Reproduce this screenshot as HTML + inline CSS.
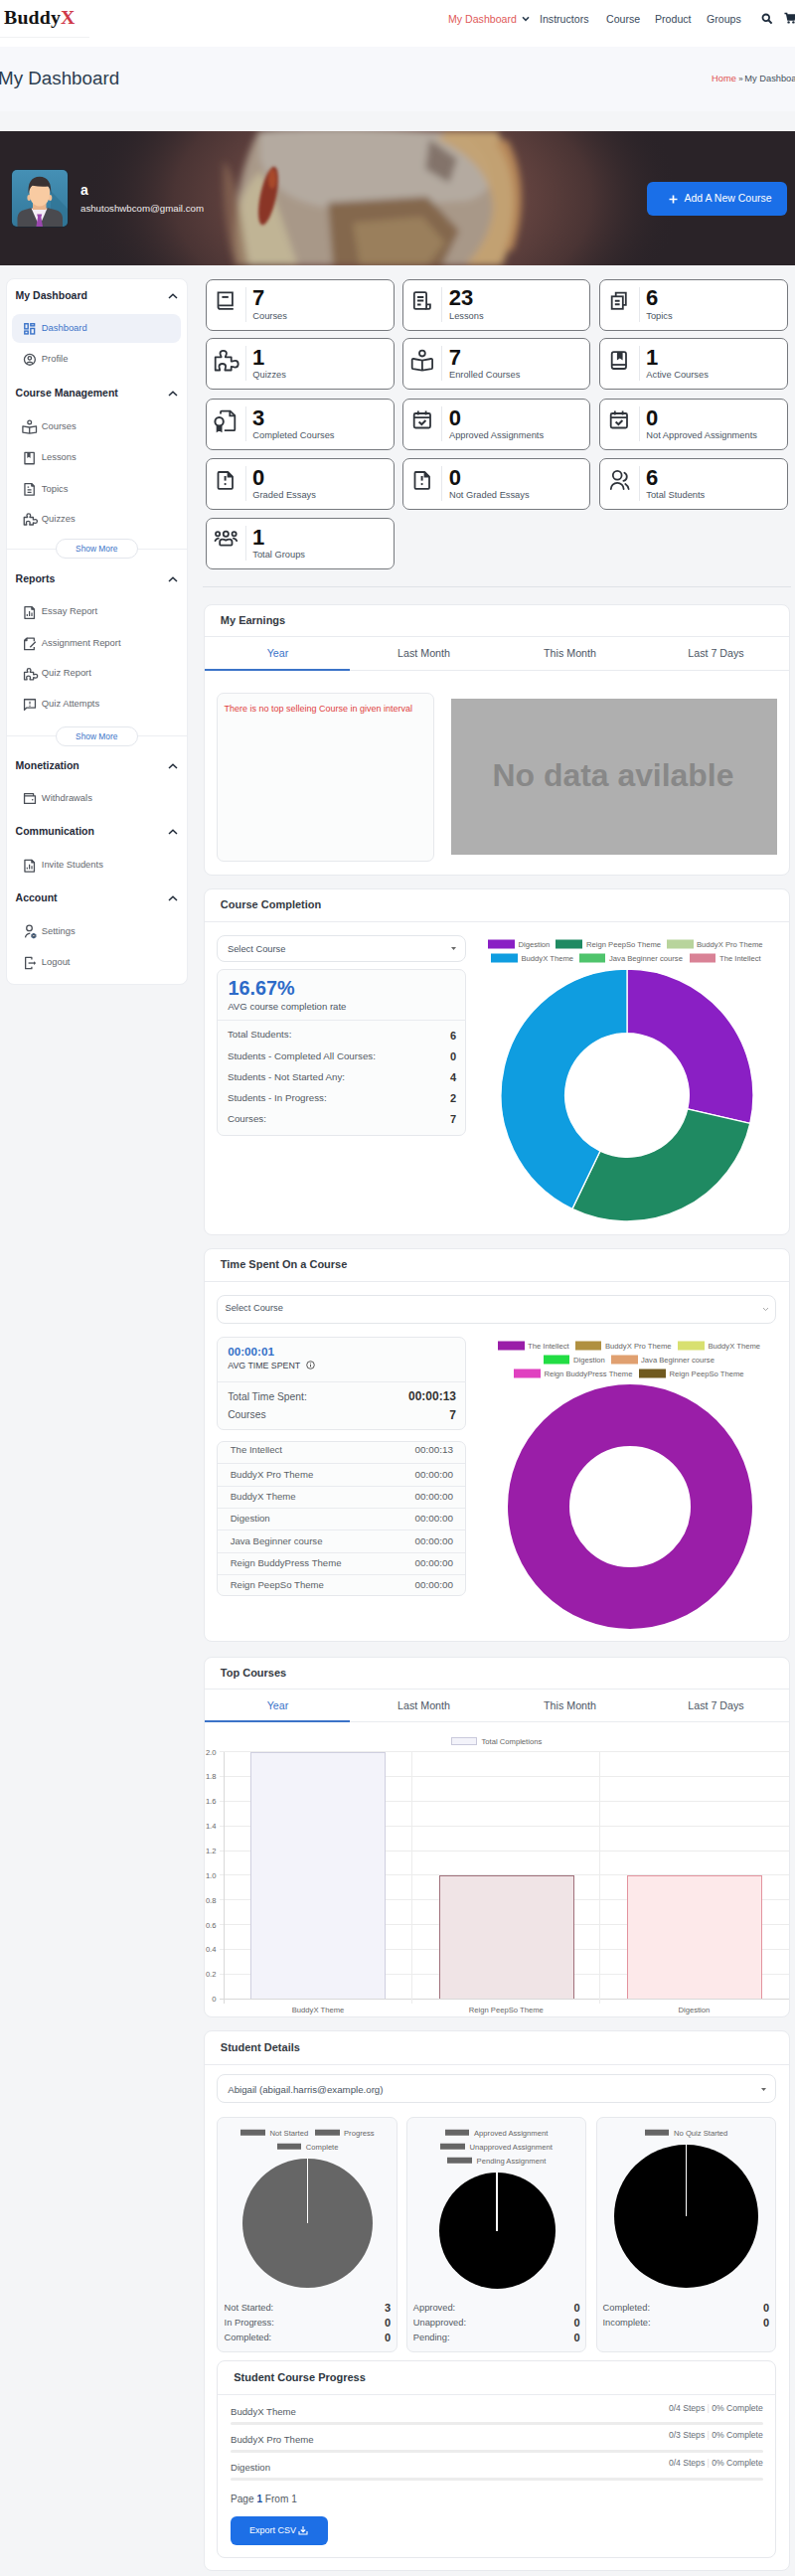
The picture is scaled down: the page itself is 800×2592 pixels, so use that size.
<!DOCTYPE html>
<html><head><meta charset="utf-8">
<style>
*{box-sizing:border-box;margin:0;padding:0}
html,body{width:800px;height:2592px;overflow:hidden}
body{position:relative;background:#f4f5f7;font-family:"Liberation Sans",sans-serif;color:#535a63}
.abs{position:absolute}
.nw{white-space:nowrap}
#hdr{left:0;top:0;width:800px;height:47px;background:#fff}
#logo{left:4px;top:5.8px;font-family:"Liberation Serif",serif;font-weight:bold;font-size:19.8px;color:#141414;letter-spacing:0.2px}
#logo span{color:#cf3a4a}
.nav{top:13px;font-size:10.6px;color:#3a4a5c;white-space:nowrap}
#band{left:0;top:47px;width:800px;height:65px;background:#f7f8fb}
#ptitle{left:-2px;top:67.8px;font-size:18.8px;color:#2c3e50;white-space:nowrap}
#crumb{left:716px;top:74px;font-size:9.3px;color:#44505c;white-space:nowrap}
#crumb a{color:#e04f4f;text-decoration:none}
#banner{left:0;top:132px;width:800px;height:135px;overflow:hidden;background:#2a2328}
#avatar{left:10.7px;top:170.3px;width:58px;height:59px}
#uname{left:81px;top:182.5px;font-size:14px;font-weight:bold;color:#fff}
#uemail{left:81px;top:204px;font-size:9.7px;color:#f0ecec}
#addbtn{left:651px;top:183px;width:141px;height:34px;border-radius:6px;background:#1a6fe8;color:#fff;font-size:10.5px;line-height:33px;padding-left:37.5px;white-space:nowrap}
#addbtn b{position:absolute;left:18px;top:0;font-size:15px;font-weight:normal}
/* sidebar */
#side{left:5.5px;top:280.3px;width:183.3px;height:711px;background:#fff;border:1px solid #eceef2;border-radius:8px}
.sh{left:15.6px;margin-top:-1px;font-size:10.5px;font-weight:bold;color:#1f2937;white-space:nowrap;transform:translateY(-50%)}
.chev{left:169px;width:10px;height:6px;transform:translateY(-50%)}
.si{left:41.8px;margin-top:-1px;font-size:9.4px;color:#63676e;white-space:nowrap;transform:translateY(-50%)}
.sic{left:23px;width:15px;height:15px;transform:translateY(-50%)}
.showmore{left:56px;width:82.5px;height:20px;border:1px solid #e3e6ec;border-radius:10px;background:#fff;color:#3b73c8;font-size:8.4px;text-align:center;line-height:18px}
.sep{left:6px;width:183px;height:1px;background:#eceef2}
/* stats */
.card{background:#fff;border:1.1px solid #76797e;border-radius:7px;width:189.6px;height:52px}
.card .ic{position:absolute;left:8.5px;top:10.5px;width:20px;height:20px}
.card .dv{position:absolute;left:38.5px;top:7.3px;width:1px;height:35px;background:#e6e8ec}
.card .num{position:absolute;left:46px;top:6.8px;font-size:22px;font-weight:bold;color:#111;line-height:24px}
.card .lbl{position:absolute;left:46.3px;top:31.2px;font-size:9.3px;color:#4b5563;white-space:nowrap}
</style></head><body>
<div id="hdr" class="abs"></div>
<div id="logo" class="abs">Buddy<span>X</span></div>
<div class="abs" style="left:0;top:37px;width:90px;height:1px;background:#f0f1f3"></div>
<div class="abs nav" style="left:451px;color:#e05a5a">My Dashboard</div>
<svg class="abs" style="left:525px;top:16px" width="8" height="6" viewBox="0 0 8 6"><path d="M1 1.2 L4 4.4 L7 1.2" stroke="#2c3e50" stroke-width="1.6" fill="none"/></svg>
<div class="abs nav" style="left:543px">Instructors</div>
<div class="abs nav" style="left:610px">Course</div>
<div class="abs nav" style="left:659px">Product</div>
<div class="abs nav" style="left:711px">Groups</div>
<svg class="abs" style="left:766px;top:13px" width="12" height="12" viewBox="0 0 12 12"><circle cx="4.8" cy="4.8" r="3.3" stroke="#1f2d3d" stroke-width="1.8" fill="none"/><path d="M7.3 7.3 L10.6 10.6" stroke="#1f2d3d" stroke-width="2"/></svg>
<svg class="abs" style="left:789px;top:12px" width="12" height="12" viewBox="0 0 12 12"><path d="M0.5 1.5 H2.6 L4 8 H10 L11.3 3 H3.2" stroke="#1f2d3d" stroke-width="1.6" fill="#1f2d3d"/><circle cx="4.6" cy="10.4" r="1.2" fill="#1f2d3d"/><circle cx="9.4" cy="10.4" r="1.2" fill="#1f2d3d"/></svg>
<div id="band" class="abs"></div>
<div id="ptitle" class="abs">My Dashboard</div>
<div id="crumb" class="abs"><a>Home</a><span style="font-size:8px;margin:0 1.5px 0 2.5px;color:#555">»</span>My Dashboard</div>
<div id="banner" class="abs"><svg width="800" height="135" viewBox="0 0 800 135">
<defs>
<radialGradient id="glow" cx="385" cy="68" r="300" gradientUnits="userSpaceOnUse" gradientTransform="translate(385 68) scale(1 0.6) translate(-385 -68)">
<stop offset="0" stop-color="#7a5448"/><stop offset="0.45" stop-color="#654440"/><stop offset="0.7" stop-color="#4a3434"/><stop offset="1" stop-color="#2a2328" stop-opacity="0"/></radialGradient>
<filter id="bl" x="-20%" y="-50%" width="140%" height="200%"><feGaussianBlur stdDeviation="3.5"/></filter>
<filter id="bl2"><feGaussianBlur stdDeviation="1.5"/></filter>
</defs>
<rect width="800" height="135" fill="#2a2328"/>
<rect x="0" y="0" width="800" height="135" fill="url(#glow)"/>
<g filter="url(#bl)">
<path d="M240 135 C232 95 238 45 260 0 L500 0 C524 40 522 95 500 135 Z" fill="#a89888"/>
<path d="M262 0 C290 -5 420 -5 470 5 C500 30 505 60 470 70 L340 78 C300 75 275 60 262 30 Z" fill="#b4aaa0"/>
<path d="M262 40 C280 70 290 110 300 135 L240 135 C230 100 240 60 262 40 Z" fill="#c4b898" opacity="0.85"/>
<path d="M225 30 C240 45 242 90 250 135 L236 135 C226 100 224 60 225 30 Z" fill="#8a6a55" opacity="0.7"/>
<path d="M330 72 L430 66 L462 100 L445 135 L335 135 Z" fill="#84684e"/>
<path d="M355 92 L425 86 L448 112 L430 135 L362 135 Z" fill="#a08460" opacity="0.8"/>
<path d="M440 8 C480 25 500 55 495 85 C490 110 478 125 468 135 L505 135 C524 95 526 45 500 0 L450 0 Z" fill="#c4a270" opacity="0.9"/>
<path d="M498 12 C518 35 522 80 508 120 L516 120 C530 80 527 35 510 8 Z" fill="#b98a5a" opacity="0.9"/>
<path d="M432 8 L460 28 L452 52 L428 38 Z" fill="#7a6a62" opacity="0.85"/>
</g>
<g filter="url(#bl2)">
<ellipse cx="270" cy="65" rx="8" ry="30" fill="#8a3628" transform="rotate(12 270 65)"/>
<ellipse cx="274" cy="48" rx="4" ry="10" fill="#a8482a"/>
</g>
</svg></div>
<div id="avatar" class="abs"><svg width="58" height="59" viewBox="0 0 58 59">
<defs><linearGradient id="avg" x1="0" y1="0" x2="0" y2="1"><stop offset="0" stop-color="#4590b5"/><stop offset="1" stop-color="#33789a"/></linearGradient></defs>
<rect x="0" y="0" width="58" height="59" rx="6" fill="#1e2630"/>
<rect x="1" y="1" width="56" height="57" rx="5" fill="url(#avg)"/>
<path d="M40 22 L57 40 V52 Q57 58 51 58 H40 Z" fill="#2f7394" opacity="0.7"/>
<path d="M6.5 58 V49 Q7 42.5 14 41 L21 39 H36.5 L44 41 Q51.5 42.5 52 49 V58 Z" fill="#4a4a4f"/>
<path d="M20.5 39.5 L28.6 58 L36.6 39.5 Z" fill="#f4eef6"/>
<path d="M26.2 45.6 H31.2 L30.4 48.6 L32 58 H25.4 L27 48.6 Z" fill="#9a47ae"/>
<rect x="22" y="33" width="13.5" height="8" fill="#e8b48c"/>
<ellipse cx="18.2" cy="29" rx="1.8" ry="3" fill="#f0bf96"/><ellipse cx="39.5" cy="29" rx="1.8" ry="3" fill="#f0bf96"/>
<path d="M18.5 22 Q18.5 37 28.8 37.5 Q39.2 37 39.2 22 Q39 15 28.8 15 Q18.6 15 18.5 22 Z" fill="#f8cba2"/>
<path d="M17.6 25 Q16.5 8 28.8 7.8 Q41 8 40.2 25 Q39.5 19.5 37.5 17.5 Q31 18.5 21.5 16.8 Q18.5 19.5 17.6 25 Z" fill="#3a3232"/>
</svg></div>
<div id="uname" class="abs">a</div>
<div id="uemail" class="abs">ashutoshwbcom@gmail.com</div>
<div id="addbtn" class="abs"><svg style="position:absolute;left:22px;top:12.5px" width="9" height="9" viewBox="0 0 9 9"><path d="M4.5 0.5 V8.5 M0.5 4.5 H8.5" stroke="#fff" stroke-width="1.7"/></svg>Add A New Course</div>
<svg width="0" height="0" style="position:absolute">
<defs>
<symbol id="i-grid" viewBox="0 0 16 16"><g fill="none" stroke="currentColor" stroke-width="1.5"><rect x="1.5" y="1.5" width="5" height="6"/><rect x="9.5" y="1.5" width="5" height="3.5"/><rect x="1.5" y="10.5" width="5" height="4"/><rect x="9.5" y="8" width="5" height="6.5"/></g></symbol>
<symbol id="i-user" viewBox="0 0 16 16"><g fill="none" stroke="currentColor" stroke-width="1.3"><circle cx="8" cy="8" r="6.5"/><circle cx="8" cy="6.5" r="2.3"/><path d="M3.8 12.8 C5 10.5 11 10.5 12.2 12.8"/></g></symbol>
<symbol id="i-read" viewBox="0 0 16 16"><g fill="none" stroke="currentColor" stroke-width="1.3"><circle cx="8" cy="3.6" r="2.2"/><path d="M1 7.5 L8 9 L15 7.5 V14.5 L8 15 L1 14.5 Z M8 9 V15"/></g></symbol>
<symbol id="i-bookmark" viewBox="0 0 16 16"><g fill="none" stroke="currentColor" stroke-width="1.3"><rect x="2.5" y="1.5" width="11" height="13"/></g><path d="M5 1.5 H10 V7 L7.5 5.5 L5 7 Z" fill="currentColor"/></symbol>
<symbol id="i-doc" viewBox="0 0 16 16"><g fill="none" stroke="currentColor" stroke-width="1.3"><path d="M3 1.5 H10 L13 4.5 V14.5 H3 Z"/><path d="M5.5 8 H10.5 M5.5 10.5 H10.5 M5.5 5.5 H8"/></g></symbol>
<symbol id="i-puzzle" viewBox="0 0 16 16"><g fill="none" stroke="currentColor" stroke-width="1.3" stroke-linejoin="round"><path d="M1.5 6 H4.5 V4 C4.5 1.5 8 1.5 8 4 V6 H11 V8.5 C13.5 8.5 13.5 12 11 12 V14.5 H8 C8 12.5 4.5 12.5 4.5 14.5 H1.5 Z"/></g></symbol>
<symbol id="i-chartdoc" viewBox="0 0 16 16"><g fill="none" stroke="currentColor" stroke-width="1.3"><path d="M3 1.5 H10 L13 4.5 V14.5 H3 Z"/><path d="M6 12 V9 M8 12 V7 M10 12 V10"/></g></symbol>
<symbol id="i-editdoc" viewBox="0 0 16 16"><g fill="none" stroke="currentColor" stroke-width="1.3"><path d="M9 2 H3 V14.5 H12 V9"/><path d="M7 10 L7.5 8 L13 2.5 L14.5 4 L9 9.5 Z"/><path d="M3 2 L5 1.5"/></g></symbol>
<symbol id="i-msg" viewBox="0 0 16 16"><g fill="none" stroke="currentColor" stroke-width="1.3"><path d="M1.5 2 H14.5 V12 H5 L2.5 14.5 V12 H1.5 Z"/><path d="M8 4.5 V8"/></g><circle cx="8" cy="10" r="0.9" fill="currentColor"/></symbol>
<symbol id="i-wallet" viewBox="0 0 16 16"><g fill="none" stroke="currentColor" stroke-width="1.3"><path d="M1.5 4 H14.5 V14.5 H1.5 Z M1.5 4 L2.5 1.5 H12 V4"/><path d="M10.5 8.5 H14.5 V11 H10.5 Z"/></g></symbol>
<symbol id="i-usergear" viewBox="0 0 16 16"><g fill="none" stroke="currentColor" stroke-width="1.3"><circle cx="6.5" cy="4.5" r="3"/><path d="M1.5 15 C1.5 10.5 4 9 7 9"/><circle cx="11.5" cy="12" r="2"/></g></symbol>
<symbol id="i-logout" viewBox="0 0 16 16"><g fill="none" stroke="currentColor" stroke-width="1.3"><path d="M10 4.5 V1.5 H2.5 V14.5 H10 V11.5"/><path d="M6 8 H14.5 M12 5.5 L14.5 8 L12 10.5"/></g></symbol>
<symbol id="s-book" viewBox="0 0 20 20"><g fill="none" stroke="currentColor" stroke-width="1.6"><path d="M3.5 16 V2.5 H16 V14.5 H5 C4 14.5 3.5 15 3.5 16 C3.5 17 4 17.5 5 17.5 H16"/><path d="M7 6 H12.5"/></g></symbol>
<symbol id="s-lesson" viewBox="0 0 20 20"><g fill="none" stroke="currentColor" stroke-width="1.6"><path d="M14 17.5 H4.5 V2.5 H14 V15.5"/><path d="M7 6 H11.5 M7 9 H11.5 M7 12 H9.5"/><path d="M12 15.5 H17 V17.5 H12"/></g></symbol>
<symbol id="s-topics" viewBox="0 0 20 20"><g fill="none" stroke="currentColor" stroke-width="1.6"><path d="M6 5 V2.5 H16.5 V14 H14"/><path d="M3.5 5 H14 V17.5 H3.5 Z"/><path d="M6 9 H11.5 M6 12 H11.5"/></g></symbol>
<symbol id="s-puzzle" viewBox="0 0 20 20"><g fill="none" stroke="currentColor" stroke-width="1.6" stroke-linejoin="round"><path d="M2 8 H5.5 V5.5 C5.5 2 10 2 10 5.5 V8 H13.5 V10.5 C17 10.5 17 15 13.5 15 V17.5 H10 C10 15 5.5 15 5.5 17.5 H2 Z"/></g></symbol>
<symbol id="s-read" viewBox="0 0 20 20"><g fill="none" stroke="currentColor" stroke-width="1.6"><circle cx="10" cy="4.5" r="2.7"/><path d="M1.8 9.5 L10 11 L18.2 9.5 V17.5 L10 18.2 L1.8 17.5 Z M10 11 V18.2"/></g></symbol>
<symbol id="s-bookmark" viewBox="0 0 20 20"><g fill="none" stroke="currentColor" stroke-width="1.6"><path d="M3.5 16 V2.5 H16 V14.5 H5 C4 14.5 3.5 15 3.5 16 C3.5 17 4 17.5 5 17.5 H16"/></g><path d="M7 2.5 H13 V9 L10 7 L7 9 Z" fill="currentColor"/></symbol>
<symbol id="s-cert" viewBox="0 0 20 20"><g fill="none" stroke="currentColor" stroke-width="1.6"><path d="M8 2 H13 L17 6 V18 H10"/><path d="M12.5 2 V6.5 H17"/><circle cx="6" cy="9.5" r="3.3"/><path d="M4.3 12.5 V17.5 L6 16 L7.7 17.5 V12.5"/></g></symbol>
<symbol id="s-cal" viewBox="0 0 20 20"><g fill="none" stroke="currentColor" stroke-width="1.6"><rect x="2.5" y="4" width="15" height="13.5"/><path d="M2.5 8 H17.5 M6 2 V5.5 M14 2 V5.5"/><path d="M7 12 L9.3 14.2 L13.3 10.2"/></g></symbol>
<symbol id="s-alert" viewBox="0 0 20 20"><g fill="none" stroke="currentColor" stroke-width="1.6"><path d="M4 2.5 H12.5 L16.5 6.5 V17.5 H4 Z"/><path d="M10.2 6.5 V11"/></g><circle cx="10.2" cy="13.5" r="1" fill="currentColor"/></symbol>
<symbol id="s-users" viewBox="0 0 20 20"><g fill="none" stroke="currentColor" stroke-width="1.6"><circle cx="8" cy="6" r="3.6"/><path d="M1.5 18 C1.5 13 4.5 11 8 11 C11.5 11 14.5 13 14.5 18"/><path d="M13 2.8 C15.5 3.6 15.5 8.4 13 9.2 M16 12 C18 13 18.5 15.5 18.5 18"/></g></symbol>
<symbol id="s-group" viewBox="0 0 20 20"><g fill="none" stroke="currentColor" stroke-width="1.5"><circle cx="10" cy="5.5" r="2.6"/><circle cx="3.6" cy="6.5" r="1.8"/><circle cx="16.4" cy="6.5" r="1.8"/><path d="M5.5 15.5 V13 C5.5 10.5 7.5 9.5 10 9.5 C12.5 9.5 14.5 10.5 14.5 13 V15.5 Z"/><path d="M0.8 12.5 C0.8 10.5 2.2 9.8 4.2 9.8 M19.2 12.5 C19.2 10.5 17.8 9.8 15.8 9.8"/></g></symbol>
<symbol id="chev" viewBox="0 0 10 6"><path d="M1 5 L5 1.2 L9 5" stroke="#1f2937" stroke-width="1.5" fill="none"/></symbol>
</defs></svg>
<div id="side" class="abs"></div>
<div class="abs sh" style="top:298px">My Dashboard</div><svg class="abs chev" style="top:298px"><use href="#chev"/></svg>
<div class="abs" style="left:12px;top:316px;width:170px;height:29px;background:#eef1f8;border-radius:8px"></div>
<div class="abs si" style="top:330px;color:#3b73c8">Dashboard</div>
<div class="abs si" style="top:361px">Profile</div>
<div class="abs sh" style="top:396px">Course Management</div><svg class="abs chev" style="top:396px"><use href="#chev"/></svg>
<div class="abs si" style="top:428.5px">Courses</div>
<div class="abs si" style="top:460px">Lessons</div>
<div class="abs si" style="top:491.5px">Topics</div>
<div class="abs si" style="top:521.5px">Quizzes</div>
<div class="abs sep" style="top:552px"></div><div class="abs showmore" style="top:542px">Show More</div>
<div class="abs sh" style="top:582.5px">Reports</div><svg class="abs chev" style="top:582.5px"><use href="#chev"/></svg>
<div class="abs si" style="top:615px">Essay Report</div>
<div class="abs si" style="top:647px">Assignment Report</div>
<div class="abs si" style="top:677px">Quiz Report</div>
<div class="abs si" style="top:708px">Quiz Attempts</div>
<div class="abs sep" style="top:740px"></div><div class="abs showmore" style="top:730.5px">Show More</div>
<div class="abs sh" style="top:770.5px">Monetization</div><svg class="abs chev" style="top:770.5px"><use href="#chev"/></svg>
<div class="abs si" style="top:802.5px">Withdrawals</div>
<div class="abs sh" style="top:837px">Communication</div><svg class="abs chev" style="top:837px"><use href="#chev"/></svg>
<div class="abs si" style="top:869.5px">Invite Students</div>
<div class="abs sh" style="top:904px">Account</div><svg class="abs chev" style="top:904px"><use href="#chev"/></svg>
<div class="abs si" style="top:936.5px">Settings</div>
<div class="abs si" style="top:967.5px">Logout</div>
<svg class="abs" style="left:0;top:0" width="200" height="1000" viewBox="0 0 200 1000">
<g fill="none" stroke="#3b73c8" stroke-width="1.4"><rect x="24.8" y="325.75" width="3.4" height="5.1"/><rect x="30.83" y="325.75" width="3.78" height="2.08"/><rect x="24.8" y="333.1" width="3.4" height="2.84"/><rect x="30.83" y="330.47" width="3.78" height="5.48"/></g>
<g fill="none" stroke="#4a4f57" stroke-width="1.3" stroke-linejoin="round">
<circle cx="29.9" cy="361.8" r="5.45"/><circle cx="29.85" cy="360.3" r="1.75"/><path d="M26.3 365.8 Q29.9 362.6 33.5 365.8"/>
<circle cx="29.7" cy="424.9" r="1.85"/><path d="M22.9 428.9 L29.7 430 L36.5 428.9 V435.1 L29.7 436.1 L22.9 435.1 Z M29.7 430 V436.1"/>
<rect x="24.95" y="455.45" width="9.3" height="11.3"/>
<path d="M24.95 486.65 H31.8 L34.25 489.1 V498.15 H24.95 Z"/><path d="M31.8 486.65 L34.25 489.1 H31.8 Z" fill="#4a4f57"/><path d="M27.6 490.2 H29.2 M27.6 492.8 H31.6 M27.6 495.3 H31.6" stroke-width="1.2"/>
<path transform="translate(24.25 516.85) scale(0.57) translate(-9.7 -12.9)" d="M9.7 19.3 H15.6 C15.6 17.9 14.5 17.3 14.5 15.6 C14.5 13.9 15.9 12.9 17.7 12.9 C19.5 12.9 20.9 13.9 20.9 15.6 C20.9 17.3 19.8 17.9 19.8 19.3 H25.7 V23.6 C27.1 23.6 27.7 22.9 29.6 22.9 C31.4 22.9 32.7 24.3 32.7 26.3 C32.7 28.3 31.4 29.6 29.6 29.6 C27.7 29.6 27.1 28.9 25.7 28.9 V32.5 H19.4 C19.4 31 20.1 30.5 20.1 28.6 C20.1 26.9 18.7 26 16.8 26 C14.9 26 13.5 26.9 13.5 28.6 C13.5 30.5 14.2 31 14.2 32.5 H9.7 Z" stroke-width="2.3"/>
<path d="M24.95 610.65 H31.9 L34.45 613.20 V622.35 H24.95 Z"/><path d="M31.9 610.65 L34.45 613.20 H31.9 Z" fill="#4a4f57"/><path d="M27.3 619.90 V618.00 M29.6 619.90 V615.00 M32 619.90 V616.60" stroke-width="1.2"/>
<path d="M27 642.15 H34.3 V645.3 M34.3 650.9 V653.65 H24.65 V644.5 L27 642.15"/><path d="M24.65 644.5 L27 642.15 V644.5 Z" fill="#4a4f57"/><path d="M30.3 651.2 L35.8 645.7"/>
<path transform="translate(24.55 672.65) scale(0.57) translate(-9.7 -12.9)" d="M9.7 19.3 H15.6 C15.6 17.9 14.5 17.3 14.5 15.6 C14.5 13.9 15.9 12.9 17.7 12.9 C19.5 12.9 20.9 13.9 20.9 15.6 C20.9 17.3 19.8 17.9 19.8 19.3 H25.7 V23.6 C27.1 23.6 27.7 22.9 29.6 22.9 C31.4 22.9 32.7 24.3 32.7 26.3 C32.7 28.3 31.4 29.6 29.6 29.6 C27.7 29.6 27.1 28.9 25.7 28.9 V32.5 H19.4 C19.4 31 20.1 30.5 20.1 28.6 C20.1 26.9 18.7 26 16.8 26 C14.9 26 13.5 26.9 13.5 28.6 C13.5 30.5 14.2 31 14.2 32.5 H9.7 Z" stroke-width="2.3"/>
<path d="M24.55 703.75 H35.45 V712.2 H26.6 L24.55 714.4 Z"/><path d="M30 705.8 V708.6" stroke-width="1.2"/>
<path d="M24.55 800.9 H35.45 V808.45 H24.55 Z M24.55 800.9 V798.65 H33.6 V800.9"/>
<path d="M24.95 865.35 H31.9 L34.45 867.90 V877.05 H24.95 Z"/><path d="M31.9 865.35 L34.45 867.90 H31.9 Z" fill="#4a4f57"/><path d="M27.3 874.60 V872.70 M29.6 874.60 V869.70 M32 874.60 V871.30" stroke-width="1.2"/>
<circle cx="29.5" cy="933.9" r="2.8"/><path d="M25.5 943.4 Q26 939.8 30.3 939.2"/><circle cx="33.9" cy="941.6" r="1.3" stroke-width="1.2"/>
<path d="M31.9 965.4 V963.45 H25.65 V974.65 H31.9 V972.7"/><path d="M28.6 969.05 H34.5"/>
</g>
<g fill="#4a4f57"><path d="M27.3 455.5 H30.6 V461 L28.95 459.7 L27.3 461 Z"/><circle cx="30" cy="710.3" r="0.7"/><circle cx="32.7" cy="804.8" r="0.8"/><path d="M34 967.2 L36.2 969.05 L34 970.9 Z"/>
<path d="M33.9 939.4 L35.9 940.5 V942.7 L33.9 943.8 L31.9 942.7 V940.5 Z" fill="none" stroke="#3f5a7a" stroke-width="1.1"/></g>
</svg>
<svg width="0" height="0" style="position:absolute"><defs><symbol id="c-book" viewBox="0 0 40 52"><g fill="none" stroke="currentColor" stroke-width="1.8"><path d="M12.5 29.5 V14.3 H26.9 V27.4 H13.5 M12.5 28.4 C12.5 30.1 13.3 30.9 14.6 30.9 H27.8" /><path d="M16.4 18.9 H22.8" stroke-width="2"/></g></symbol><symbol id="c-lesson" viewBox="0 0 40 52"><g fill="none" stroke="currentColor" stroke-width="1.8"><path d="M13.3 14.2 H22.6 Q24.1 14.2 24.1 15.7 V29.4 Q24.1 30.9 22.6 30.9 H13.3 Q11.8 30.9 11.8 29.4 V15.7 Q11.8 14.2 13.3 14.2 Z"/><path d="M24.1 26.3 H27.9 V29.3 Q27.9 30.9 26.3 30.9 H22.8"/><path d="M15 18.9 H21.3 M15 22.6 H21.3 M15 26.4 H18.6" stroke-width="2"/></g></symbol><symbol id="c-topics" viewBox="0 0 40 52"><g fill="none" stroke="currentColor" stroke-width="1.8"><rect x="12.7" y="18.3" width="11.1" height="12.5"/><path d="M16.7 18.3 V14.6 H26.8 V26.8 H23.8"/><path d="M15.8 22.8 H20.6 M15.8 26.3 H20.6" stroke-width="2"/></g></symbol><symbol id="c-puzzle" viewBox="0 0 40 52"><g fill="none" stroke="currentColor" stroke-width="1.8"><path d="M9.7 19.3 H15.6 C15.6 17.9 14.5 17.3 14.5 15.6 C14.5 13.9 15.9 12.9 17.7 12.9 C19.5 12.9 20.9 13.9 20.9 15.6 C20.9 17.3 19.8 17.9 19.8 19.3 H25.7 V23.6 C27.1 23.6 27.7 22.9 29.6 22.9 C31.4 22.9 32.7 24.3 32.7 26.3 C32.7 28.3 31.4 29.6 29.6 29.6 C27.7 29.6 27.1 28.9 25.7 28.9 V32.5 H19.4 C19.4 31 20.1 30.5 20.1 28.6 C20.1 26.9 18.7 26 16.8 26 C14.9 26 13.5 26.9 13.5 28.6 C13.5 30.5 14.2 31 14.2 32.5 H9.7 Z" stroke-linejoin="round"/></g></symbol><symbol id="c-read" viewBox="0 0 40 52"><g fill="none" stroke="currentColor" stroke-width="1.8"><circle cx="19.9" cy="15.6" r="2.9"/><path d="M9.7 22.2 Q9.7 20.8 11.1 21 L19.9 22.6 L28.7 21 Q30.1 20.8 30.1 22.2 V30 Q30.1 31 29.1 31.2 L19.9 32.7 L10.7 31.2 Q9.7 31 9.7 30 Z M19.9 22.6 V32.5" stroke-linejoin="round"/></g></symbol><symbol id="c-bookmark" viewBox="0 0 40 52"><g fill="none" stroke="currentColor" stroke-width="1.8"><rect x="12.7" y="14.2" width="14.3" height="16.8" rx="2"/><path d="M12.7 27 H27"/><path d="M17.9 14.2 H23.6 V22.6 L20.75 20.6 L17.9 22.6 Z" fill="currentColor" stroke="none"/></g></symbol><symbol id="c-cert" viewBox="0 0 40 52"><g fill="none" stroke="currentColor" stroke-width="1.8"><path d="M15 15.5 V13.7 Q15 12.7 16 12.7 H24.6 L29.3 17.2 V31.2 Q29.3 32.2 28.3 32.2 H18.8"/><path d="M24.3 12.9 V17.3 H29.1"/><circle cx="13.6" cy="23.2" r="4.2" stroke-width="2"/><path d="M11.6 27.4 V32.6 L13.6 31.4 L15.6 32.6 V27.4" fill="currentColor"/></g></symbol><symbol id="c-cal" viewBox="0 0 40 52"><g fill="none" stroke="currentColor" stroke-width="1.8"><rect x="11.7" y="15" width="16.3" height="14.5" rx="1.5"/><path d="M11.7 19.2 H28 M15.8 12.5 V16.5 M23.6 12.5 V16.5"/><path d="M16.6 23.4 L19.4 26 L23.4 22" stroke-width="2"/></g></symbol><symbol id="c-alert" viewBox="0 0 40 52"><g fill="none" stroke="currentColor" stroke-width="1.8"><path d="M13.5 14 H22.3 L27 18.7 V29.8 Q27 30.8 26 30.8 H13.5 Q12.5 30.8 12.5 29.8 V15 Q12.5 14 13.5 14 Z" stroke-linejoin="round"/><path d="M22.5 14.2 V18.5 H26.8" fill="currentColor"/><path d="M19.6 18 V22.6" stroke-width="2"/><circle cx="19.6" cy="26.1" r="1.1" fill="currentColor" stroke="none"/></g></symbol><symbol id="c-users" viewBox="0 0 40 52"><g fill="none" stroke="currentColor" stroke-width="1.8"><circle cx="18.2" cy="17.3" r="4.4"/><path d="M11.8 31 A6.4 6.2 0 0 1 24.6 31" stroke-linecap="round"/><path d="M25.4 14.7 A4.4 4.4 0 0 1 24.4 22.9" stroke-linecap="round"/><path d="M26.3 25.9 C28 27 29.3 28.8 29.6 31" stroke-linecap="round"/></g></symbol><symbol id="c-group" viewBox="0 0 40 52"><g fill="none" stroke="currentColor" stroke-width="1.8"><circle cx="20.3" cy="16.2" r="2.6"/><circle cx="12.1" cy="16.3" r="2.1"/><circle cx="28.6" cy="16.3" r="2.1"/><path d="M14.2 26.7 V24.3 Q14.2 21.6 16.6 21.6 Q18.6 21.6 20.3 22.6 Q22 21.6 24 21.6 Q26.5 21.6 26.5 24.3 V26.7 Q26.5 27.6 25.6 27.6 H15.1 Q14.2 27.6 14.2 26.7 Z" stroke-linejoin="round"/><path d="M9.5 23.1 Q10.3 21 12.8 20.6 M27.9 20.6 Q30.4 21 31.2 23.1" stroke-linecap="round"/></g></symbol></defs></svg>
<div class="abs card" style="left:207px;top:280.5px"><svg style="position:absolute;left:-1px;top:-1.5px;color:#2f343b" width="40" height="52"><use href="#c-book"/></svg><div class="dv"></div><div class="num">7</div><div class="lbl">Courses</div></div>
<div class="abs card" style="left:404.7px;top:280.5px"><svg style="position:absolute;left:-1px;top:-1.5px;color:#2f343b" width="40" height="52"><use href="#c-lesson"/></svg><div class="dv"></div><div class="num">23</div><div class="lbl">Lessons</div></div>
<div class="abs card" style="left:603px;top:280.5px"><svg style="position:absolute;left:-1px;top:-1.5px;color:#2f343b" width="40" height="52"><use href="#c-topics"/></svg><div class="dv"></div><div class="num">6</div><div class="lbl">Topics</div></div>
<div class="abs card" style="left:207px;top:340.2px"><svg style="position:absolute;left:-1px;top:-1.6px;color:#2f343b" width="40" height="52"><use href="#c-puzzle"/></svg><div class="dv"></div><div class="num">1</div><div class="lbl">Quizzes</div></div>
<div class="abs card" style="left:404.7px;top:340.2px"><svg style="position:absolute;left:-1px;top:-1.6px;color:#2f343b" width="40" height="52"><use href="#c-read"/></svg><div class="dv"></div><div class="num">7</div><div class="lbl">Enrolled Courses</div></div>
<div class="abs card" style="left:603px;top:340.2px"><svg style="position:absolute;left:-1px;top:-1.6px;color:#2f343b" width="40" height="52"><use href="#c-bookmark"/></svg><div class="dv"></div><div class="num">1</div><div class="lbl">Active Courses</div></div>
<div class="abs card" style="left:207px;top:401px"><svg style="position:absolute;left:-1px;top:-1.0px;color:#2f343b" width="40" height="52"><use href="#c-cert"/></svg><div class="dv"></div><div class="num">3</div><div class="lbl">Completed Courses</div></div>
<div class="abs card" style="left:404.7px;top:401px"><svg style="position:absolute;left:-1px;top:-1.0px;color:#2f343b" width="40" height="52"><use href="#c-cal"/></svg><div class="dv"></div><div class="num">0</div><div class="lbl">Approved Assignments</div></div>
<div class="abs card" style="left:603px;top:401px"><svg style="position:absolute;left:-1px;top:-1.0px;color:#2f343b" width="40" height="52"><use href="#c-cal"/></svg><div class="dv"></div><div class="num">0</div><div class="lbl">Not Approved Assignments</div></div>
<div class="abs card" style="left:207px;top:461.2px"><svg style="position:absolute;left:-1px;top:-1.2px;color:#2f343b" width="40" height="52"><use href="#c-alert"/></svg><div class="dv"></div><div class="num">0</div><div class="lbl">Graded Essays</div></div>
<div class="abs card" style="left:404.7px;top:461.2px"><svg style="position:absolute;left:-1px;top:-1.2px;color:#2f343b" width="40" height="52"><use href="#c-alert"/></svg><div class="dv"></div><div class="num">0</div><div class="lbl">Not Graded Essays</div></div>
<div class="abs card" style="left:603px;top:461.2px"><svg style="position:absolute;left:-1px;top:-1.2px;color:#2f343b" width="40" height="52"><use href="#c-users"/></svg><div class="dv"></div><div class="num">6</div><div class="lbl">Total Students</div></div>
<div class="abs card" style="left:207px;top:521px"><svg style="position:absolute;left:-1px;top:-1.0px;color:#2f343b" width="40" height="52"><use href="#c-group"/></svg><div class="dv"></div><div class="num">1</div><div class="lbl">Total Groups</div></div>
<div class="abs" style="left:204px;top:590px;width:592px;height:1px;background:#dfe2e7"></div>
<style>
.sec{position:absolute;left:205px;width:589.5px;background:#fff;border:1px solid #e8eaee;border-radius:8px}
.st{position:absolute;left:221.8px;font-size:11px;font-weight:bold;color:#343a42;white-space:nowrap;transform:translateY(-50%)}
.hl{position:absolute;left:206px;width:588px;height:1px;background:#e9ebef}
.tab{position:absolute;width:147px;text-align:center;font-size:10.7px;color:#4b5563;transform:translateY(-50%)}
.box{position:absolute;background:#fbfcfc;border:1px solid #e6e8ec;border-radius:7px}
.sel{position:absolute;background:#fff;border:1px solid #e3e6ea;border-radius:8px}
.tx{position:absolute;white-space:nowrap;transform:translateY(-50%)}
.rv{position:absolute;white-space:nowrap;transform:translate(-100%,-50%)}
.lg{position:absolute;font-size:7.65px;color:#666;white-space:nowrap;transform:translateY(-50%)}
.lb{position:absolute;width:26.5px;height:9px;transform:translateY(-50%)}
.ctr{position:absolute;white-space:nowrap;transform:translate(-50%,-50%)}
</style>
<!-- My Earnings -->
<div class="sec" style="top:607.5px;height:273px"></div>
<div class="st" style="top:624px">My Earnings</div>
<div class="hl" style="top:640px"></div>
<div class="tab" style="left:206px;top:657px;color:#3b73c8">Year</div>
<div class="tab" style="left:353px;top:657px">Last Month</div>
<div class="tab" style="left:500px;top:657px">This Month</div>
<div class="tab" style="left:647px;top:657px">Last 7 Days</div>
<div class="hl" style="top:673.5px"></div>
<div class="abs" style="left:206px;top:672.5px;width:146px;height:2px;background:#3b73c8"></div>
<div class="box" style="left:218.3px;top:697px;width:219px;height:170px"></div>
<div class="tx" style="left:225.4px;top:712.8px;font-size:9px;color:#e03c3c">There is no top selleing Course in given interval</div>
<div class="abs" style="left:453.6px;top:703.2px;width:328px;height:157px;background:#afafaf"></div>
<div class="ctr" style="left:617px;top:780px;font-size:31.9px;font-weight:bold;color:#888">No data avilable</div>
<!-- Course Completion -->
<div class="sec" style="top:893.5px;height:349px"></div>
<div class="st" style="top:910px">Course Completion</div>
<div class="hl" style="top:926.5px"></div>
<div class="sel" style="left:218.3px;top:940.6px;width:251px;height:27.5px"></div>
<div class="tx" style="left:229px;top:954.7px;font-size:9.3px;color:#4b5563">Select Course</div>
<svg class="abs" style="left:454px;top:953px" width="5" height="4" viewBox="0 0 5 4"><path d="M0 0 H5 L2.5 3 Z" fill="#666"/></svg>
<div class="box" style="left:218.3px;top:975px;width:251px;height:167.5px"></div>
<div class="abs" style="left:219px;top:1026px;width:249.5px;height:1px;background:#e9ebef"></div>
<div class="tx" style="left:229.6px;top:993.8px;font-size:19.8px;font-weight:bold;color:#2d6bc8">16.67%</div>
<div class="tx" style="left:229.2px;top:1012px;font-size:9.6px;color:#4b5563">AVG course completion rate</div>
<div class="tx" style="left:228.9px;top:1040.3px;font-size:9.75px">Total Students:</div><div class="rv" style="left:459px;top:1041.5px;font-size:11px;font-weight:bold;color:#333">6</div>
<div class="tx" style="left:228.9px;top:1061.8px;font-size:9.75px">Students - Completed All Courses:</div><div class="rv" style="left:459px;top:1063px;font-size:11px;font-weight:bold;color:#333">0</div>
<div class="tx" style="left:228.9px;top:1082.9px;font-size:9.75px">Students - Not Started Any:</div><div class="rv" style="left:459px;top:1084px;font-size:11px;font-weight:bold;color:#333">4</div>
<div class="tx" style="left:228.9px;top:1104.1px;font-size:9.75px">Students - In Progress:</div><div class="rv" style="left:459px;top:1105.3px;font-size:11px;font-weight:bold;color:#333">2</div>
<div class="tx" style="left:228.9px;top:1125.2px;font-size:9.75px">Courses:</div><div class="rv" style="left:459px;top:1126.4px;font-size:11px;font-weight:bold;color:#333">7</div>
<div class="lb" style="left:491.3px;top:949.6px;background:#8a1fc4"></div><div class="lg" style="left:521.5px;top:949.6px">Digestion</div>
<div class="lb" style="left:559px;top:949.6px;background:#1f8a62"></div><div class="lg" style="left:590px;top:949.6px">Reign PeepSo Theme</div>
<div class="lb" style="left:671.3px;top:949.6px;background:#b8d49c"></div><div class="lg" style="left:701px;top:949.6px">BuddyX Pro Theme</div>
<div class="lb" style="left:494.3px;top:964px;background:#0f9de0"></div><div class="lg" style="left:524.5px;top:964px">BuddyX Theme</div>
<div class="lb" style="left:582.6px;top:964px;background:#4fc46c"></div><div class="lg" style="left:613px;top:964px">Java Beginner course</div>
<div class="lb" style="left:693.6px;top:964px;background:#d98296"></div><div class="lg" style="left:724px;top:964px">The Intellect</div>
<svg class="abs" style="left:503.5px;top:974.6px" width="254" height="254" viewBox="-127 -127 254 254">
<g stroke="#fff" stroke-width="1.3" stroke-linejoin="round">
<path d="M0 -127 A127 127 0 0 1 123.8 28.3 L60.8 13.9 A62.4 62.4 0 0 0 0 -62.4 Z" fill="#8a1fc4"/>
<path d="M123.8 28.3 A127 127 0 0 1 -55.1 114.4 L-27.1 56.2 A62.4 62.4 0 0 0 60.8 13.9 Z" fill="#1f8a62"/>
<path d="M-55.1 114.4 A127 127 0 0 1 0 -127 L0 -62.4 A62.4 62.4 0 0 0 -27.1 56.2 Z" fill="#0f9de0"/>
</g></svg>
<!-- Time Spent -->
<div class="sec" style="top:1256px;height:396px"></div>
<div class="st" style="top:1272.4px">Time Spent On a Course</div>
<div class="hl" style="top:1289.3px"></div>
<div class="sel" style="left:218.3px;top:1303.4px;width:563px;height:28.5px"></div>
<div class="tx" style="left:226.5px;top:1316.4px;font-size:9.3px;color:#4b5563">Select Course</div>
<svg class="abs" style="left:767px;top:1314.5px" width="7" height="5" viewBox="0 0 7 5"><path d="M1 1 L3.5 3.6 L6 1" stroke="#aaa" stroke-width="1" fill="none"/></svg>
<div class="box" style="left:218.3px;top:1344.6px;width:251px;height:94.5px"></div>
<div class="abs" style="left:219px;top:1390.4px;width:249.5px;height:1px;background:#e9ebef"></div>
<div class="tx" style="left:229.2px;top:1358.8px;font-size:11.7px;font-weight:bold;color:#3370c8">00:00:01</div>
<div class="tx" style="left:229.2px;top:1373.8px;font-size:8.8px;color:#3b4450">AVG TIME SPENT</div>
<svg class="abs" style="left:307.5px;top:1369.3px" width="9" height="9" viewBox="0 0 9 9"><circle cx="4.5" cy="4.5" r="3.8" stroke="#444" stroke-width="0.9" fill="none"/><path d="M4.5 4 V6.5" stroke="#444" stroke-width="0.9"/><circle cx="4.5" cy="2.7" r="0.55" fill="#444"/></svg>
<div class="tx" style="left:229.2px;top:1404.8px;font-size:10.3px">Total Time Spent:</div><div class="rv" style="left:459px;top:1405px;font-size:12px;font-weight:bold;color:#333">00:00:13</div>
<div class="tx" style="left:229.2px;top:1423.2px;font-size:10.3px">Courses</div><div class="rv" style="left:459px;top:1423.5px;font-size:12px;font-weight:bold;color:#333">7</div>
<div class="box" style="left:218.3px;top:1450px;width:251px;height:155.5px;overflow:hidden">
 <div style="position:absolute;left:0;top:21px;width:100%;border-top:1px solid #e9ebef"></div>
 <div style="position:absolute;left:0;top:43.5px;width:100%;border-top:1px solid #e9ebef"></div>
 <div style="position:absolute;left:0;top:66px;width:100%;border-top:1px solid #e9ebef"></div>
 <div style="position:absolute;left:0;top:88.3px;width:100%;border-top:1px solid #e9ebef"></div>
 <div style="position:absolute;left:0;top:110.7px;width:100%;border-top:1px solid #e9ebef"></div>
 <div style="position:absolute;left:0;top:133px;width:100%;border-top:1px solid #e9ebef"></div>
</div>
<div class="abs" style="left:219px;top:1455.6px;width:249px;height:15px;overflow:hidden"><div class="tx" style="left:12.7px;top:2.7px;font-size:9.6px;color:#5a5f66">The Intellect</div><div class="rv" style="left:237px;top:2.7px;font-size:9.9px;color:#5a5f66">00:00:13</div></div>
<div class="tx" style="left:231.7px;top:1482.5px;font-size:9.6px;color:#5a5f66">BuddyX Pro Theme</div><div class="rv" style="left:456px;top:1482.5px;font-size:9.9px;color:#5a5f66">00:00:00</div>
<div class="tx" style="left:231.7px;top:1505px;font-size:9.6px;color:#5a5f66">BuddyX Theme</div><div class="rv" style="left:456px;top:1505px;font-size:9.9px;color:#5a5f66">00:00:00</div>
<div class="tx" style="left:231.7px;top:1527px;font-size:9.6px;color:#5a5f66">Digestion</div><div class="rv" style="left:456px;top:1527px;font-size:9.9px;color:#5a5f66">00:00:00</div>
<div class="tx" style="left:231.7px;top:1549.7px;font-size:9.6px;color:#5a5f66">Java Beginner course</div><div class="rv" style="left:456px;top:1549.7px;font-size:9.9px;color:#5a5f66">00:00:00</div>
<div class="tx" style="left:231.7px;top:1572px;font-size:9.6px;color:#5a5f66">Reign BuddyPress Theme</div><div class="rv" style="left:456px;top:1572px;font-size:9.9px;color:#5a5f66">00:00:00</div>
<div class="tx" style="left:231.7px;top:1594.3px;font-size:9.6px;color:#5a5f66">Reign PeepSo Theme</div><div class="rv" style="left:456px;top:1594.3px;font-size:9.9px;color:#5a5f66">00:00:00</div>
<div class="lb" style="left:501px;top:1354px;background:#9a1ea8"></div><div class="lg" style="left:531px;top:1354px">The Intellect</div>
<div class="lb" style="left:578.6px;top:1354px;background:#b09040"></div><div class="lg" style="left:609px;top:1354px">BuddyX Pro Theme</div>
<div class="lb" style="left:682px;top:1354px;background:#d8e070"></div><div class="lg" style="left:712.5px;top:1354px">BuddyX Theme</div>
<div class="lb" style="left:546.8px;top:1367.8px;background:#22dd44"></div><div class="lg" style="left:577px;top:1367.8px">Digestion</div>
<div class="lb" style="left:615.3px;top:1367.8px;background:#e0a070"></div><div class="lg" style="left:645px;top:1367.8px">Java Beginner course</div>
<div class="lb" style="left:517px;top:1381.8px;background:#e040c0"></div><div class="lg" style="left:547.4px;top:1381.8px">Reign BuddyPress Theme</div>
<div class="lb" style="left:643px;top:1381.8px;background:#705a20"></div><div class="lg" style="left:673.5px;top:1381.8px">Reign PeepSo Theme</div>
<div class="abs" style="left:510.6px;top:1393.3px;width:246px;height:246px;border-radius:50%;border:62px solid #9a1ea8"></div>
<!-- Top Courses -->
<div class="sec" style="top:1667px;height:363px"></div>
<div class="st" style="top:1682.6px">Top Courses</div>
<div class="hl" style="top:1699.2px"></div>
<div class="tab" style="left:206px;top:1715.7px;color:#3b73c8">Year</div>
<div class="tab" style="left:353px;top:1715.7px">Last Month</div>
<div class="tab" style="left:500px;top:1715.7px">This Month</div>
<div class="tab" style="left:647px;top:1715.7px">Last 7 Days</div>
<div class="hl" style="top:1732px"></div>
<div class="abs" style="left:206px;top:1730.8px;width:146px;height:2px;background:#3b73c8"></div>
<div class="abs" style="left:454.4px;top:1748px;width:26px;height:8px;background:#f3f3fa;border:1px solid #c9c9db"></div>
<div class="lg" style="left:484.5px;top:1752px">Total Completions</div>
<div class="abs" style="left:220.5px;top:2010.5px;width:573px;height:1px;background:#d9d9d9"></div>
<div class="rv" style="left:217.5px;top:2011.0px;font-size:7.65px;color:#666">0</div>
<div class="abs" style="left:220.5px;top:1985.7px;width:573px;height:1px;background:#ececec"></div>
<div class="rv" style="left:217.5px;top:1986.2px;font-size:7.65px;color:#666">0.2</div>
<div class="abs" style="left:220.5px;top:1960.8px;width:573px;height:1px;background:#ececec"></div>
<div class="rv" style="left:217.5px;top:1961.3px;font-size:7.65px;color:#666">0.4</div>
<div class="abs" style="left:220.5px;top:1936.0px;width:573px;height:1px;background:#ececec"></div>
<div class="rv" style="left:217.5px;top:1936.5px;font-size:7.65px;color:#666">0.6</div>
<div class="abs" style="left:220.5px;top:1911.1px;width:573px;height:1px;background:#ececec"></div>
<div class="rv" style="left:217.5px;top:1911.6px;font-size:7.65px;color:#666">0.8</div>
<div class="abs" style="left:220.5px;top:1886.3px;width:573px;height:1px;background:#ececec"></div>
<div class="rv" style="left:217.5px;top:1886.8px;font-size:7.65px;color:#666">1.0</div>
<div class="abs" style="left:220.5px;top:1861.5px;width:573px;height:1px;background:#ececec"></div>
<div class="rv" style="left:217.5px;top:1862.0px;font-size:7.65px;color:#666">1.2</div>
<div class="abs" style="left:220.5px;top:1836.6px;width:573px;height:1px;background:#ececec"></div>
<div class="rv" style="left:217.5px;top:1837.1px;font-size:7.65px;color:#666">1.4</div>
<div class="abs" style="left:220.5px;top:1811.8px;width:573px;height:1px;background:#ececec"></div>
<div class="rv" style="left:217.5px;top:1812.3px;font-size:7.65px;color:#666">1.6</div>
<div class="abs" style="left:220.5px;top:1786.9px;width:573px;height:1px;background:#ececec"></div>
<div class="rv" style="left:217.5px;top:1787.4px;font-size:7.65px;color:#666">1.8</div>
<div class="abs" style="left:220.5px;top:1762.1px;width:573px;height:1px;background:#ececec"></div>
<div class="rv" style="left:217.5px;top:1762.6px;font-size:7.65px;color:#666">2.0</div>
<div class="abs" style="left:225.1px;top:1762.5px;width:1px;height:253px;background:#d9d9d9"></div>
<div class="abs" style="left:414.2px;top:1762.5px;width:1px;height:253px;background:#ececec"></div>
<div class="abs" style="left:603.3px;top:1762.5px;width:1px;height:253px;background:#ececec"></div>
<div class="abs" style="left:252px;top:1762.6px;width:136px;height:248.5px;background:#f3f3fa;border:1px solid #cfcfdf;border-bottom:none"></div>
<div class="abs" style="left:441.5px;top:1887px;width:136.2px;height:124.1px;background:#f0e4e6;border:1px solid #a0707a;border-bottom:none"></div>
<div class="abs" style="left:631.3px;top:1887px;width:136.2px;height:124.1px;background:#fde9ea;border:1px solid #e3939e;border-bottom:none"></div>
<div class="ctr" style="left:320px;top:2022.3px;font-size:7.65px;color:#666">BuddyX Theme</div>
<div class="ctr" style="left:509.3px;top:2022.3px;font-size:7.65px;color:#666">Reign PeepSo Theme</div>
<div class="ctr" style="left:698.4px;top:2022.3px;font-size:7.65px;color:#666">Digestion</div>
<!-- Student Details -->
<div class="sec" style="top:2043.4px;height:543.8px"></div>
<div class="st" style="top:2060px">Student Details</div>
<div class="hl" style="top:2076.8px"></div>
<div class="sel" style="left:218.3px;top:2087.4px;width:563px;height:28.5px"></div>
<div class="tx" style="left:229.2px;top:2102.2px;font-size:9.7px;color:#4b5563">Abigail (abigail.harris@example.org)</div>
<svg class="abs" style="left:766.3px;top:2100.8px" width="5" height="4" viewBox="0 0 5 4"><path d="M0 0 H5 L2.5 3 Z" fill="#666"/></svg>
<div class="box" style="left:218.3px;top:2129.6px;width:181.7px;height:237.7px;background:#f8f9fb"></div>
<div class="box" style="left:408.8px;top:2129.6px;width:181.2px;height:237.7px;background:#f8f9fb"></div>
<div class="box" style="left:599.8px;top:2129.6px;width:181px;height:237.7px;background:#f8f9fb"></div>
<div class="lb" style="left:242.2px;top:2145.5px;width:24.7px;height:6.5px;background:#666"></div><div class="lg" style="left:271.6px;top:2145.5px">Not Started</div>
<div class="lb" style="left:316.9px;top:2145.5px;width:24.7px;height:6.5px;background:#666"></div><div class="lg" style="left:346px;top:2145.5px">Progress</div>
<div class="lb" style="left:278.7px;top:2159.5px;width:24.7px;height:6.5px;background:#666"></div><div class="lg" style="left:307.8px;top:2159.5px">Complete</div>
<div class="abs" style="left:244px;top:2171.6px;width:130.8px;height:130.8px;border-radius:50%;background:#666"></div>
<div class="abs" style="left:308.8px;top:2171.6px;width:1.3px;height:65.4px;background:#fff"></div>
<div class="lb" style="left:447.8px;top:2145.5px;width:24.7px;height:6.5px;background:#666"></div><div class="lg" style="left:477px;top:2145.5px">Approved Assignment</div>
<div class="lb" style="left:443.3px;top:2159.5px;width:24.7px;height:6.5px;background:#666"></div><div class="lg" style="left:472.5px;top:2159.5px">Unapproved Assignment</div>
<div class="lb" style="left:450.3px;top:2173.6px;width:24.7px;height:6.5px;background:#666"></div><div class="lg" style="left:479.6px;top:2173.6px">Pending Assignment</div>
<div class="abs" style="left:441.5px;top:2186px;width:117px;height:117px;border-radius:50%;background:#000"></div>
<div class="abs" style="left:499.4px;top:2186px;width:1.3px;height:58.5px;background:#fff"></div>
<div class="lb" style="left:648.6px;top:2145.6px;width:24.7px;height:6.5px;background:#666"></div><div class="lg" style="left:678px;top:2145.6px">No Quiz Started</div>
<div class="abs" style="left:618.3px;top:2157.5px;width:144.8px;height:144.8px;border-radius:50%;background:#000"></div>
<div class="abs" style="left:690px;top:2157.5px;width:1.3px;height:72.4px;background:#fff"></div>
<div class="tx" style="left:225.6px;top:2322px;font-size:9.3px">Not Started:</div><div class="rv" style="left:393.1px;top:2322.3px;font-size:11px;font-weight:bold;color:#333">3</div>
<div class="tx" style="left:225.6px;top:2337px;font-size:9.3px">In Progress:</div><div class="rv" style="left:393.1px;top:2337.3px;font-size:11px;font-weight:bold;color:#333">0</div>
<div class="tx" style="left:225.6px;top:2351.5px;font-size:9.3px">Completed:</div><div class="rv" style="left:393.1px;top:2351.8px;font-size:11px;font-weight:bold;color:#333">0</div>
<div class="tx" style="left:415.8px;top:2322px;font-size:9.3px">Approved:</div><div class="rv" style="left:583.6px;top:2322.3px;font-size:11px;font-weight:bold;color:#333">0</div>
<div class="tx" style="left:415.8px;top:2337px;font-size:9.3px">Unapproved:</div><div class="rv" style="left:583.6px;top:2337.3px;font-size:11px;font-weight:bold;color:#333">0</div>
<div class="tx" style="left:415.8px;top:2351.5px;font-size:9.3px">Pending:</div><div class="rv" style="left:583.6px;top:2351.8px;font-size:11px;font-weight:bold;color:#333">0</div>
<div class="tx" style="left:606.5px;top:2322px;font-size:9.3px">Completed:</div><div class="rv" style="left:774px;top:2322.3px;font-size:11px;font-weight:bold;color:#333">0</div>
<div class="tx" style="left:606.5px;top:2337px;font-size:9.3px">Incomplete:</div><div class="rv" style="left:774px;top:2337.3px;font-size:11px;font-weight:bold;color:#333">0</div>
<!-- Student Course Progress -->
<div class="abs" style="left:218.3px;top:2374.8px;width:563px;height:199px;background:#fff;border:1px solid #e6e8ec;border-radius:8px"></div>
<div class="tx" style="left:235.2px;top:2391.7px;font-size:11px;font-weight:bold;color:#2d3640">Student Course Progress</div>
<div class="abs" style="left:219px;top:2409.3px;width:561.5px;height:1px;background:#e9ebef"></div>
<div class="tx" style="left:232px;top:2426.2px;font-size:9.6px">BuddyX Theme</div><div class="rv" style="left:767.8px;top:2422.6px;font-size:8.6px;color:#666d76">0/4 Steps <span style="color:#ddd">|</span> 0% Complete</div>
<div class="abs" style="left:232px;top:2436.6px;width:536px;height:3px;background:#ececec;border-radius:2px"></div>
<div class="tx" style="left:232px;top:2454px;font-size:9.6px">BuddyX Pro Theme</div><div class="rv" style="left:767.8px;top:2450.2px;font-size:8.6px;color:#666d76">0/3 Steps <span style="color:#ddd">|</span> 0% Complete</div>
<div class="abs" style="left:232px;top:2464.6px;width:536px;height:3px;background:#ececec;border-radius:2px"></div>
<div class="tx" style="left:232px;top:2482.2px;font-size:9.6px">Digestion</div><div class="rv" style="left:767.8px;top:2478.3px;font-size:8.6px;color:#666d76">0/4 Steps <span style="color:#ddd">|</span> 0% Complete</div>
<div class="abs" style="left:232px;top:2492.8px;width:536px;height:3px;background:#ececec;border-radius:2px"></div>
<div class="tx" style="left:232px;top:2514px;font-size:10.1px">Page <b style="color:#1d4ea0">1</b> From 1</div>
<div class="abs" style="left:232px;top:2531.9px;width:98.3px;height:29px;background:#1d6fe6;border-radius:6px"></div>
<div class="tx" style="left:251px;top:2546.3px;font-size:9px;color:#fff">Export CSV</div>
<svg class="abs" style="left:300px;top:2541px" width="10" height="10" viewBox="0 0 10 10"><path d="M5 1 V6.5 M2.8 4.5 L5 6.7 L7.2 4.5 M1 6 V9 H9 V6" stroke="#fff" stroke-width="1.1" fill="none"/></svg>
</body></html>
